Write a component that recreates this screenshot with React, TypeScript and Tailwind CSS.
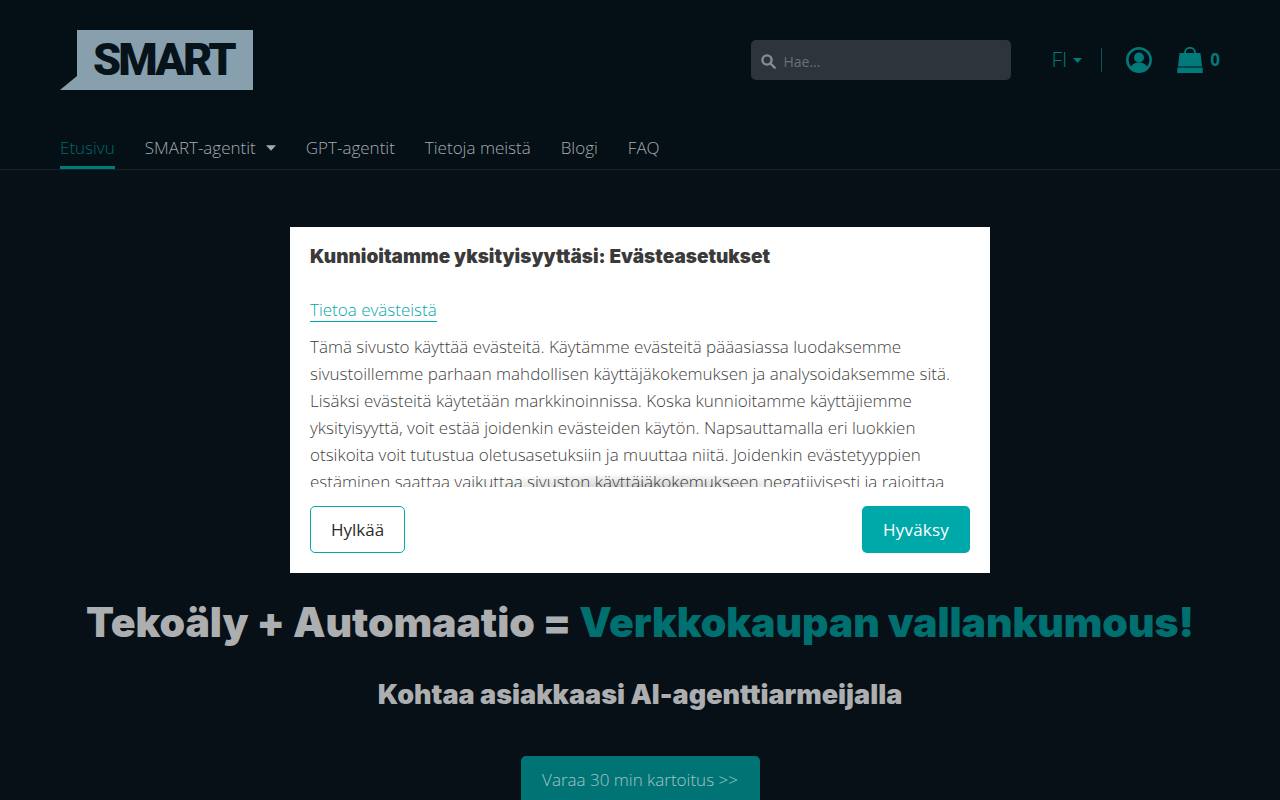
function Logo() {
  return (
    <div className="relative w-[193px] h-[60px] shrink-0">
      <svg width="193" height="60" viewBox="0 0 193 60" className="block">
        <polygon points="17,0 193,0 193,60 0,60 17,46" fill="#88a0ad" />
      </svg>
      <span className="absolute left-[33px] top-[7px] text-[45px] leading-[46px] font-black tracking-[-2.9px] text-[#07131a] font-['Roboto',sans-serif]">
        SMART
      </span>
    </div>
  );
}

function Caret({ color, w = 9 }: { color: string; w?: number }) {
  return (
    <svg width={w} height={Math.round(w * 0.55)} viewBox="0 0 10 5.5" className="block">
      <path d="M0 0h10L5 5.5z" fill={color} />
    </svg>
  );
}

function SearchIcon() {
  return (
    <svg width="15" height="15" viewBox="0 0 15 15" fill="none" stroke="#8a8d90" strokeWidth="2.4">
      <circle cx="6" cy="6" r="4.6" />
      <path d="M9.5 9.5l4.2 4.2" strokeLinecap="round" />
    </svg>
  );
}

function UserIcon() {
  return (
    <svg width="26" height="26" viewBox="0 0 26 26">
      <circle cx="13" cy="13" r="11.7" fill="none" stroke="#007a7a" strokeWidth="2.5" />
      <circle cx="13" cy="10.5" r="5" fill="#007a7a" />
      <path d="M4.5 21c1.5-4 4.5-5.5 8.5-5.5s7 1.5 8.500 5.500c-2 2.600-5 4-8.500 4s-6.500-1.400-8.500-4z" fill="#007a7a" />
    </svg>
  );
}

function BagIcon() {
  return (
    <svg width="26" height="26" viewBox="0 0 26 26">
      <path d="M8 7V5.500a5 4.700 0 0 1 10 0V7" fill="none" stroke="#007a7a" strokeWidth="1.800" />
      <path d="M2.500 6h21l1.500 13.500H1z" fill="#007a7a" />
      <path d="M0.500 20.500h25L25.800 26H0.200z" fill="#007a7a" />
    </svg>
  );
}

export default function App() {
  return (
    <div className="relative h-[800px] w-[1280px] overflow-hidden bg-[#071016] font-['Open_Sans',sans-serif] font-light text-[17px]">
      <header className="bg-[#050f16] h-[170px] flex flex-col border-b border-[#1a2329]">
        <div className="flex items-center justify-between pl-[60px] pr-[60px] pt-[30px]">
          <Logo />
          <div className="flex items-center">
            <div className="w-[260px] h-[40px] bg-[#2d343b] rounded-[5px] flex items-center pl-[10px] pt-[2px] gap-[7px]">
              <SearchIcon />
              <span className="text-[14px] font-normal text-[#6b7176]">Hae...</span>
            </div>
            <div className="ml-[40px] flex items-center gap-[6px] text-[#007a7a] text-[21px]">
              <span>FI</span>
              <Caret color="#007a7a" />
            </div>
            <div className="ml-[19px] w-px h-[24px] bg-[#00585a]" />
            <div className="ml-[24px]"><UserIcon /></div>
            <div className="ml-[25px]"><BagIcon /></div>
            <span className="ml-[7px] text-[#007a7a] font-bold text-[17px]">0</span>
          </div>
        </div>
        <nav className="mt-auto flex items-end gap-[30px] pl-[60px] text-[#a6abae]">
          <a className="h-[34px] border-b-[3px] border-[#007a7a] text-[#00696b]">Etusivu</a>
          <a className="h-[34px] flex items-start gap-[10px]">
            SMART-agentit
            <span className="mt-[10px]"><Caret color="#a6abae" w={10} /></span>
          </a>
          <a className="h-[34px]">GPT-agentit</a>
          <a className="h-[34px]">Tietoja meistä</a>
          <a className="h-[34px]">Blogi</a>
          <a className="h-[34px]">FAQ</a>
        </nav>
      </header>

      <main className="flex flex-col items-center pt-[423px]">
        <h1 className="font-['Inter',sans-serif] font-black text-[41px] leading-[58px] tracking-[-0.08px] text-[#acaeb0] whitespace-nowrap">
          Tekoäly + Automaatio = <span className="text-[#006f70]">Verkkokaupan vallankumous!</span>
        </h1>
        <h2 className="mt-[26px] font-['Inter',sans-serif] font-black text-[27px] leading-[36px] text-[#acaeb0]">
          Kohtaa asiakkaasi AI-agenttiarmeijalla
        </h2>
        <a className="mt-[43px] h-[48px] w-[239px] flex items-center justify-center rounded-[5px] bg-[#007475] text-[#a4c4c6]">
          Varaa 30 min kartoitus &gt;&gt;
        </a>
      </main>

      <div className="absolute left-[290px] top-[227px] w-[700px] h-[346px] bg-white flex flex-col">
        <div className="px-[20px] pt-[17px] h-[260px] overflow-hidden relative">
          <h3 className="font-['Inter',sans-serif] font-black text-[19px] leading-[26px] text-[#3a3a3a]">
            Kunnioitamme yksityisyyttäsi: Evästeasetukset
          </h3>
          <a className="mt-[28px] inline-block text-[#00a9a9] leading-[23px] border-b border-[#00a9a9]">Tietoa evästeistä</a>
          <p className="mt-[10px] text-[#3f3f3f] leading-[27px]">
            Tämä sivusto käyttää evästeitä. Käytämme evästeitä pääasiassa luodaksemme sivustoillemme parhaan mahdollisen käyttäjäkokemuksen ja analysoidaksemme sitä. Lisäksi evästeitä käytetään markkinoinnissa. Koska kunnioitamme käyttäjiemme yksityisyyttä, voit estää joidenkin evästeiden käytön. Napsauttamalla eri luokkien otsikoita voit tutustua oletusasetuksiin ja muuttaa niitä. Joidenkin evästetyyppien estäminen saattaa vaikuttaa sivuston käyttäjäkokemukseen negatiivisesti ja rajoittaa tarjoamiamme palveluja.
          </p>
          <div className="absolute left-[150px] right-[150px] bottom-0 h-[14px] bg-[radial-gradient(ellipse_at_bottom,rgba(0,0,0,0.18),rgba(0,0,0,0)_70%)]" />
        </div>
        <div className="flex justify-between px-[20px] pt-[19px]">
          <button className="h-[47px] w-[95px] rounded-[5px] border border-[#00a9a9] text-[#2b2b2b] font-normal text-[17px]">Hylkää</button>
          <button className="h-[47px] w-[108px] rounded-[5px] bg-[#00a9a9] text-white font-normal text-[17px] tracking-[0.2px]">Hyväksy</button>
        </div>
      </div>
    </div>
  );
}
